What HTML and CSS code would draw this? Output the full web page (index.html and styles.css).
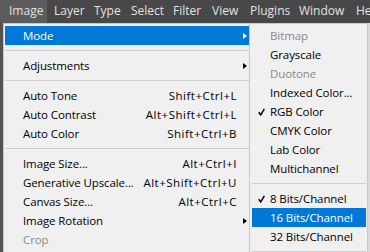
FILE: index.html
```html
<!DOCTYPE html>
<html>
<head>
<meta charset="utf-8">
<link rel="stylesheet" href="styles.css">
</head>
<body>
<div class="menubar">
  <span class="mb-item active">Image</span>
  <span class="mb-item">Layer</span>
  <span class="mb-item">Type</span>
  <span class="mb-item">Select</span>
  <span class="mb-item">Filter</span>
  <span class="mb-item">View</span>
  <span class="mb-item">Plugins</span>
  <span class="mb-item">Window</span>
  <span class="mb-item">Help</span>
</div>

<div class="menu main-menu">
  <div class="item sel"><span class="label">Mode</span><span class="sub-col"><span class="arrow"></span></span></div>
  <div class="sep"></div>
  <div class="item"><span class="label">Adjustments</span><span class="sub-col"><span class="arrow"></span></span></div>
  <div class="sep"></div>
  <div class="item"><span class="label">Auto Tone</span><span class="key">Shift+Ctrl+L</span><span class="sub-col"></span></div>
  <div class="item"><span class="label">Auto Contrast</span><span class="key">Alt+Shift+Ctrl+L</span><span class="sub-col"></span></div>
  <div class="item"><span class="label">Auto Color</span><span class="key">Shift+Ctrl+B</span><span class="sub-col"></span></div>
  <div class="sep"></div>
  <div class="item"><span class="label">Image Size...</span><span class="key">Alt+Ctrl+I</span><span class="sub-col"></span></div>
  <div class="item"><span class="label">Generative Upscale...</span><span class="key">Alt+Shift+Ctrl+U</span><span class="sub-col"></span></div>
  <div class="item"><span class="label">Canvas Size...</span><span class="key">Alt+Ctrl+C</span><span class="sub-col"></span></div>
  <div class="item"><span class="label">Image Rotation</span><span class="sub-col"><span class="arrow"></span></span></div>
  <div class="item disabled"><span class="label">Crop</span><span class="sub-col"></span></div>
</div>

<div class="menu sub-menu">
  <div class="item disabled"><span class="label">Bitmap</span></div>
  <div class="item"><span class="label">Grayscale</span></div>
  <div class="item disabled"><span class="label">Duotone</span></div>
  <div class="item"><span class="label">Indexed Color...</span></div>
  <div class="item checked"><svg class="check" width="7" height="8" viewBox="0 0 7 8"><path d="M0.7 4.3 L2.7 6.9 L6.4 0.8" fill="none" stroke="#000" stroke-width="1.5"/></svg><span class="label">RGB Color</span></div>
  <div class="item"><span class="label">CMYK Color</span></div>
  <div class="item"><span class="label">Lab Color</span></div>
  <div class="item"><span class="label">Multichannel</span></div>
  <div class="sep"></div>
  <div class="item checked"><svg class="check" width="7" height="8" viewBox="0 0 7 8"><path d="M0.7 4.3 L2.7 6.9 L6.4 0.8" fill="none" stroke="#000" stroke-width="1.5"/></svg><span class="label">8 Bits/Channel</span></div>
  <div class="item sel"><span class="label">16 Bits/Channel</span></div>
  <div class="item"><span class="label">32 Bits/Channel</span></div>
  <div class="sep"></div>
</div>
</body>
</html>
```

FILE: styles.css
```css
html, body {
  margin: 0;
  padding: 0;
}
body {
  width: 370px;
  height: 252px;
  overflow: hidden;
  background: #535353;
  position: relative;
  font-family: "Open Sans", "Noto Sans", sans-serif;
  font-size: 11.5px;
}
.menubar {
  height: 23px;
  background: #484848;
  display: grid;
  grid-template-columns: 47px 40px 37px 42px 39px 38px 49px 57px 21px;
  color: #e2e2e2;
  font-size: 12px;
  overflow: hidden;
}
.mb-item {
  display: flex;
  align-items: center;
  padding-left: 7px;
  white-space: nowrap;
  line-height: 1;
  padding-bottom: 1px;
  overflow: hidden;
}
.mb-item.active {
  background: #5c5c5c;
  padding-left: 9px;
}
.menu {
  position: absolute;
  top: 23px;
  background: #f0f0f0;
  border: 1px solid #c8c8c8;
  box-sizing: border-box;
  color: #000;
}
.main-menu {
  left: 3px;
  width: 248px;
  height: 245px;
  padding: 2px 0 0 1px;
}
.sub-menu {
  left: 249px;
  width: 119px;
  height: 240px;
  padding: 2px 1px 0 2px;
  box-shadow: 2px 0 0 #dadada;
}
.item {
  height: 19px;
  display: flex;
  align-items: center;
  padding-left: 18px;
  position: relative;
  white-space: nowrap;
}
.item .label {
  flex: 1;
  letter-spacing: -0.1px;
}
.item .key {
  text-align: right;
  letter-spacing: 0.5px;
}
.sub-col {
  width: 13px;
  height: 19px;
  display: flex;
  align-items: center;
  padding-left: 6px;
  box-sizing: border-box;
}
.arrow {
  width: 0;
  height: 0;
  border-left: 4px solid #000;
  border-top: 3.5px solid transparent;
  border-bottom: 3.5px solid transparent;
}
.item.sel {
  background: #0078d7;
  color: #fff;
}
.item.sel .arrow {
  border-left-color: #fff;
}
.item.disabled {
  color: #8a8a8a;
}
.check {
  position: absolute;
  left: 6px;
  top: 6px;
}
.sep {
  height: 1px;
  margin: 5px 0;
  background: #cfcfcf;
}
```
